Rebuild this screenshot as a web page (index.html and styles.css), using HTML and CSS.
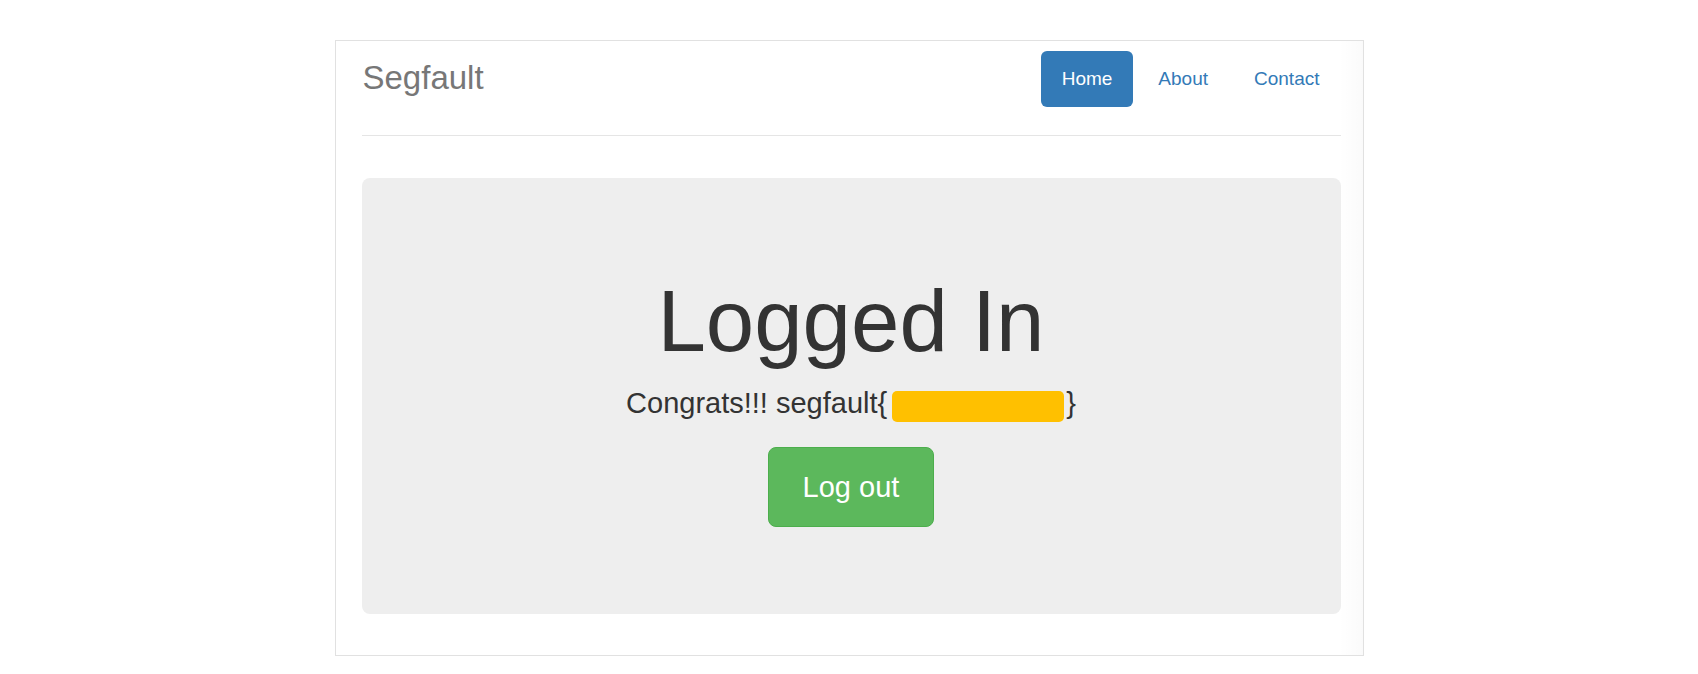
FILE: index.html
```html
<!DOCTYPE html>
<html lang="en">
<head>
<meta charset="utf-8">
<title>Segfault</title>
<link rel="stylesheet" href="styles.css">
</head>
<body>
<div class="page">
  <div class="frame">
    <header class="header">
      <div class="brand">Segfault</div>
      <nav class="nav">
        <a class="pill active" href="#">Home</a>
        <a class="pill" href="#">About</a>
        <a class="pill" href="#">Contact</a>
      </nav>
    </header>
    <main class="jumbotron">
      <h1 class="title">Logged In</h1>
      <p class="lead">Congrats!!! segfault{<span class="redact"></span>}</p>
      <a class="btn-logout" href="#">Log out</a>
    </main>
  </div>
</div>
</body>
</html>
```
FILE: styles.css
```css
html, body {
  margin: 0;
  padding: 0;
  background: #ffffff;
}

body {
  font-family: "Liberation Sans", Arial, Helvetica, sans-serif;
  color: #333333;
}

.page {
  display: flex;
  justify-content: center;
  padding-top: 40px;
}

.frame {
  box-sizing: border-box;
  width: 1029px;
  border: 1px solid #e1e1e1;
  padding: 10px 22px 41px 26px;
  background: linear-gradient(to right, rgba(255,255,255,0) 0, rgba(255,255,255,0) 1003px, rgba(0,0,0,0.018) 1027px);
}

.header {
  display: flex;
  justify-content: space-between;
  align-items: flex-start;
  padding-bottom: 28px;
  border-bottom: 1px solid #e5e5e5;
}

.brand {
  font-size: 33px;
  line-height: 33px;
  margin-top: 10px;
  margin-left: 1px;
  color: #777777;
}

.nav {
  display: flex;
  gap: 4px;
}

.pill {
  display: block;
  font-size: 19px;
  line-height: 28px;
  padding: 14px 21px;
  border-radius: 6px;
  color: #337ab7;
  text-decoration: none;
}

.pill.active {
  background: #337ab7;
  color: #ffffff;
}

.jumbotron {
  margin-top: 42px;
  background: #eeeeee;
  border-radius: 8px;
  padding: 95px 20px 87px;
  display: flex;
  flex-direction: column;
  align-items: center;
  text-align: center;
}

.title {
  margin: 0 0 15px;
  font-size: 87px;
  line-height: 95px;
  font-weight: normal;
  color: #333333;
}

.lead {
  margin: 0 0 23px;
  font-size: 29px;
  line-height: 41px;
  color: #333333;
}

.redact {
  display: inline-block;
  width: 172px;
  height: 31px;
  margin-left: 5px;
  margin-right: 2px;
  vertical-align: -9px;
  background: #ffc000;
  border-radius: 5px;
}

.btn-logout {
  display: block;
  box-sizing: border-box;
  height: 80px;
  line-height: 78px;
  padding: 0 34px;
  font-size: 29px;
  color: #ffffff;
  background: #5cb85c;
  border: 1px solid #4cae4c;
  border-radius: 8px;
  text-decoration: none;
}
```
